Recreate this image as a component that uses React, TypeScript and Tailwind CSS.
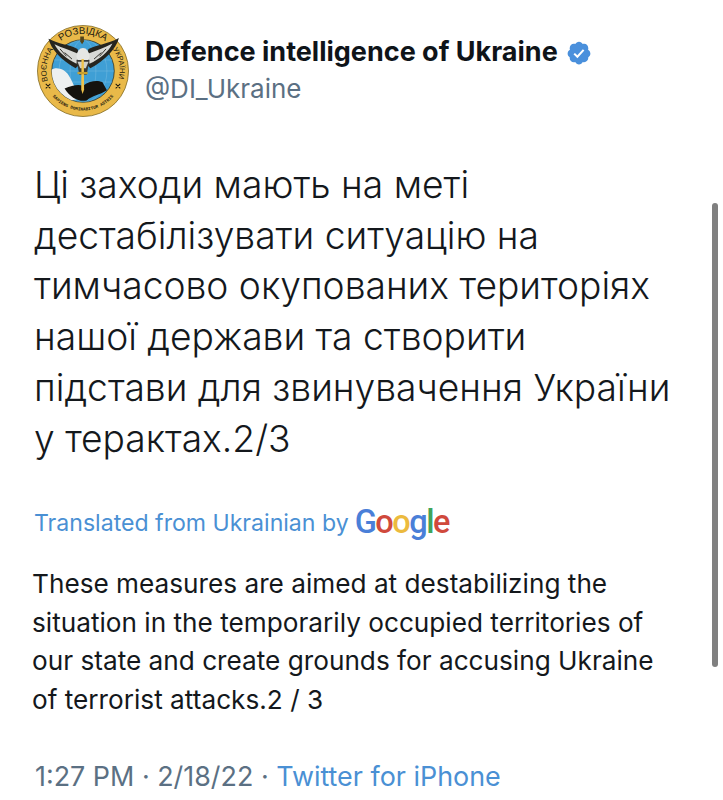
const Logo = () => (
  <svg viewBox="0 0 100 100" className="w-[92px] h-[92px] shrink-0">
    <defs>
      <path id="arcTop" d="M 21.5 21.5 A 40 40 0 0 1 78.5 21.5" />
      <path id="arcLeft" d="M 12.4 62.8 A 39.5 39.5 0 0 1 19 25" />
      <path id="arcRight" d="M 80 23 A 39.5 39.5 0 0 1 87.6 62" />
      <path id="arcBottom" d="M 14.8 74.7 A 43 43 0 0 0 85.2 74.7" />
      <clipPath id="inner"><circle cx="50" cy="50" r="34" /></clipPath>
    </defs>
    <circle cx="50" cy="50" r="49.5" fill="#e9b949" stroke="#7a6522" strokeWidth="0.8" />
    <circle cx="50" cy="50" r="34" fill="#3f9fd5" stroke="#2f2b1a" strokeWidth="0.8" />
    <g clipPath="url(#inner)">
      <g stroke="#7cbde2" strokeWidth="0.5" fill="none">
        <ellipse cx="50" cy="50" rx="14" ry="34" />
        <ellipse cx="50" cy="50" rx="26" ry="34" />
        <path d="M16 38 H84 M16 50 H84 M16 62 H84" />
      </g>
      <path d="M14 50 C20 44 30 48 34 54 C38 60 42 70 46 80 L24 86 Z" fill="#eef0f1" />
      <path d="M30 69 C38 66 44 64 50 66 C58 60 66 60 71 62 L76 71 C68 76 60 77 54 82 C46 84 36 79 30 69 Z" fill="#15130f" />
    </g>
    <path d="M44 26 C34 21 24 21 12.5 15 C15 26 26 38 42 47 L49 40 Z" fill="#26251f" />
    <path d="M56 26 C66 21 76 21 89 14 C86 26 74 38 58 47 L51 40 Z" fill="#26251f" />
    <path d="M44 31 C35 27 27 25 19 21 C23 29 32 37 43 42 Z" fill="#d9dad6" />
    <path d="M56 31 C65 27 73 25 82 20 C78 29 68 37 57 42 Z" fill="#d9dad6" />
    <path d="M30 30 L38 37 M25 26 L32 34 M70 30 L62 37 M75 26 L68 34" stroke="#26251f" strokeWidth="1" />
    <ellipse cx="50" cy="34" rx="7" ry="9" fill="#e6e7e4" />
    <path d="M43 38 L57 38 L54 54 L46 54 Z" fill="#3a3935" />
    <path d="M44 40 L56 40 L53 47 L47 47 Z" fill="#cfd0cc" />
    <path d="M48.4 37 L50.9 37 L51.2 70 L49.6 75 L48.1 70 Z" fill="#efc24a" />
    <path d="M44 51 H55 V53.5 H44 Z" fill="#c9a02e" />
    <path d="M47 12.5 H51 V18 L49 21 L47 18 Z" fill="#54451a" />
    <text fontFamily="'Liberation Sans', sans-serif" fontSize="10.5" fill="#1d1a10">
      <textPath href="#arcTop" startOffset="50%" textAnchor="middle">РОЗВІДКА</textPath>
    </text>
    <text fontFamily="'Liberation Sans', sans-serif" fontSize="8.5" fill="#1d1a10">
      <textPath href="#arcLeft" startOffset="50%" textAnchor="middle">ВОЄННА</textPath>
    </text>
    <text fontFamily="'Liberation Sans', sans-serif" fontSize="8" fill="#1d1a10">
      <textPath href="#arcRight" startOffset="50%" textAnchor="middle">УКРАЇНИ</textPath>
    </text>
    <text fontFamily="'Liberation Mono', monospace" fontSize="4.8" fontWeight="700" fill="#1d1a10">
      <textPath href="#arcBottom" startOffset="50%" textAnchor="middle">SAPIENS DOMINABITUR ASTRIS</textPath>
    </text>
    <path d="M9.5 64 L14.5 69 M14.5 64 L9.5 69 M85.5 64 L90.5 69 M90.5 64 L85.5 69" stroke="#1d1a10" strokeWidth="1.1" />
  </svg>
);

const Verified = () => (
  <svg viewBox="0 0 24 24" className="w-[26px] h-[26px] shrink-0">
    <path
      fill="#4a90dc"
      d="M22.5 12.5c0-1.58-.875-2.95-2.148-3.6.154-.435.238-.905.238-1.4 0-2.21-1.71-3.998-3.818-3.998-.47 0-.92.084-1.336.25C14.818 2.415 13.51 1.5 12 1.5s-2.816.917-3.437 2.25c-.415-.165-.866-.25-1.336-.25-2.11 0-3.818 1.79-3.818 4 0 .494.083.964.237 1.4-1.272.65-2.147 2.018-2.147 3.6 0 1.495.782 2.798 1.942 3.486-.02.17-.032.34-.032.514 0 2.21 1.708 4 3.818 4 .47 0 .92-.086 1.335-.25.62 1.334 1.926 2.25 3.437 2.25 1.512 0 2.818-.916 3.437-2.25.415.163.865.248 1.336.248 2.11 0 3.818-1.79 3.818-4 0-.174-.012-.344-.033-.513 1.158-.687 1.943-1.99 1.943-3.484z"
    />
    <path fill="#fff" d="M10.54 16.85 6.9 13.21l1.37-1.32 2.18 2.18 5.1-5.56 1.42 1.29z" />
  </svg>
);

const uk = ["Ці заходи мають на меті", "дестабілізувати ситуацію на", "тимчасово окупованих територіях", "нашої держави та створити", "підстави для звинувачення України", "у терактах.2/3"];
const en = ["These measures are aimed at destabilizing the", "situation in the temporarily occupied territories of", "our state and create grounds for accusing Ukraine", "of terrorist attacks.2 / 3"];

export default function App() {
  return (
    <div className="relative w-[723px] h-[800px] overflow-hidden bg-white text-[#0f1419] font-['Inter','Liberation_Sans',sans-serif]">
      <div className="absolute left-[712px] top-[203px] w-[6px] h-[464px] rounded-full bg-[#808080]" />
      <div className="flex items-center gap-[16px] pl-[37px] pt-[25px]">
        <Logo />
        <div className="flex flex-col -mt-[1px]">
          <div className="flex items-center gap-[8px] h-[36px]">
            <span className="text-[27px] font-bold whitespace-nowrap">Defence intelligence of Ukraine</span>
            <Verified />
          </div>
          <span className="text-[26px] leading-[36px] text-[#5b7083]">@DI_Ukraine</span>
        </div>
      </div>
      <div className="pl-[34px] pt-[43px] text-[37.2px] leading-[50.7px] font-light text-[#14181c] whitespace-nowrap">
        {uk.map((l) => <div key={l}>{l}</div>)}
      </div>
      <div className="flex items-center pl-[34px] pt-[43px] h-[76px]">
        <span className="text-[23.1px] text-[#4a90d4] whitespace-nowrap">Translated from Ukrainian by</span>
        <span className="ml-[6px] text-[32.5px] font-['Roboto','Liberation_Sans',sans-serif] font-medium tracking-[-1.5px] leading-none -mt-[3px]">
          <span className="text-[#4a7fd8]">G</span><span className="text-[#d0493c]">o</span><span className="text-[#ecba3e]">o</span><span className="text-[#4a7fd8]">g</span><span className="text-[#3fa45a]">l</span><span className="text-[#d0493c]">e</span>
        </span>
      </div>
      <div className="pl-[32px] pt-[25px] text-[26.2px] leading-[38.5px] text-[#14181c] whitespace-nowrap">
        {en.map((l) => <div key={l}>{l}</div>)}
      </div>
      <div className="pl-[35px] pt-[39px] text-[26.9px] leading-[36px] text-[#5b7083] whitespace-nowrap">
        1:27 PM · 2/18/22 · <span className="text-[#4a90d4]">Twitter for iPhone</span>
      </div>
    </div>
  );
}
